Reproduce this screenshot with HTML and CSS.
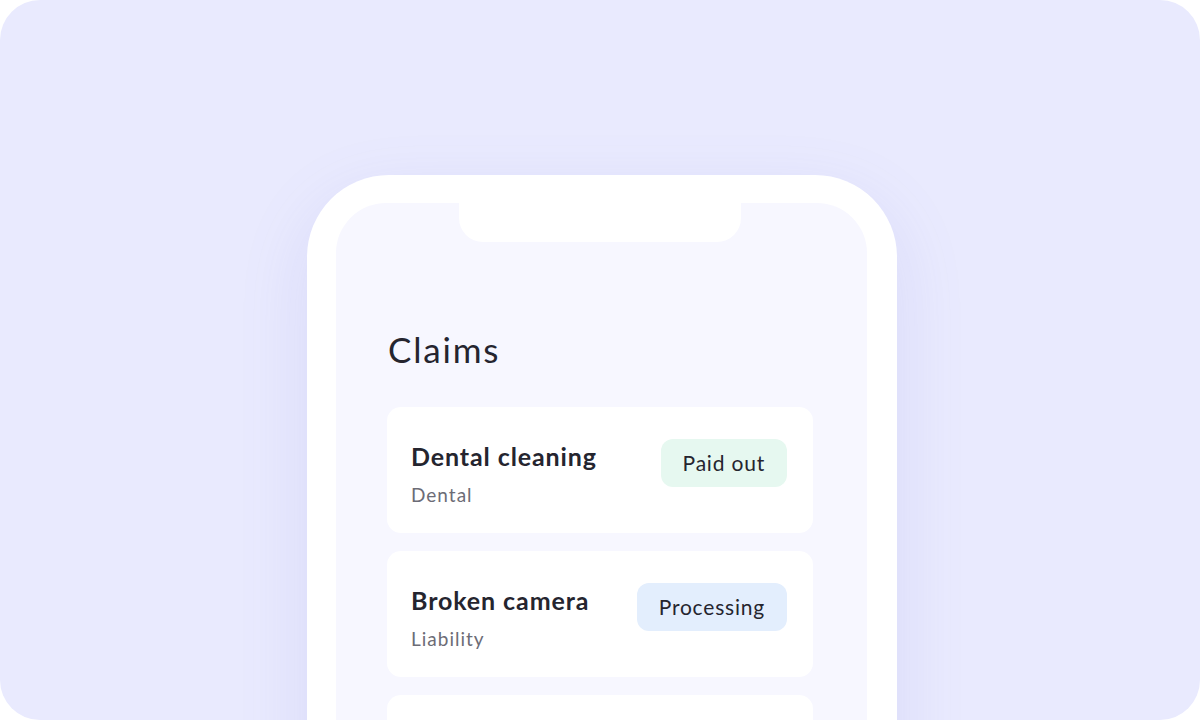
FILE: index.html
```html
<!DOCTYPE html>
<html>
<head>
<meta charset="utf-8">
<link rel="stylesheet" href="styles.css">
</head>
<body>
<div class="stage">
  <div class="phone">
    <div class="screen">
      <div class="notch"></div>
      <h1 class="title">Claims</h1>
      <div class="list">
        <div class="card">
          <div class="info">
            <div class="name">Dental cleaning</div>
            <div class="cat">Dental</div>
          </div>
          <div class="badge paid">Paid out</div>
        </div>
        <div class="card">
          <div class="info">
            <div class="name">Broken camera</div>
            <div class="cat">Liability</div>
          </div>
          <div class="badge processing">Processing</div>
        </div>
        <div class="card"></div>
      </div>
    </div>
  </div>
</div>
</body>
</html>
```
FILE: styles.css
```css
html, body {
  margin: 0;
  padding: 0;
  background: #ffffff;
}
body {
  font-family: Lato, "Open Sans", sans-serif;
  color: #25252f;
}
.stage {
  width: 1200px;
  height: 720px;
  border-radius: 40px;
  background: #e9eafe;
  overflow: hidden;
  display: flex;
  justify-content: center;
  padding: 175px 0 0 4px;
  box-sizing: border-box;
}
.phone {
  width: 590px;
  height: 700px;
  flex: none;
  background: #ffffff;
  border-radius: 82px;
  padding: 28px 30px 0 29px;
  box-sizing: border-box;
  box-shadow: 0 24px 70px rgba(110, 110, 210, 0.14);
}
.screen {
  position: relative;
  background: #f7f7ff;
  border-radius: 50px 50px 0 0;
  height: 100%;
  padding: 124px 54px 0 51px;
  box-sizing: border-box;
}
.notch {
  position: absolute;
  top: 0;
  left: 123px;
  width: 282px;
  height: 39px;
  background: #ffffff;
  border-radius: 0 0 24px 24px;
}
.title {
  margin: 0 0 36px 1px;
  font-size: 35px;
  font-weight: 400;
  line-height: 44px;
  letter-spacing: 1.8px;
  color: #25252f;
}
.list {
  display: flex;
  flex-direction: column;
  gap: 18px;
}
.card {
  background: #ffffff;
  border-radius: 14px;
  height: 126px;
  padding: 32px 26px 0 24px;
  box-sizing: border-box;
  display: flex;
  justify-content: space-between;
  align-items: flex-start;
}
.name {
  font-size: 25px;
  font-weight: 700;
  line-height: 35px;
  letter-spacing: 0.9px;
  color: #25252f;
}
.cat {
  margin-top: 9px;
  font-size: 19px;
  line-height: 24px;
  color: #6c6c76;
  letter-spacing: 1px;
}
.badge {
  height: 48px;
  padding: 0 22px;
  border-radius: 12px;
  font-size: 21px;
  line-height: 48px;
  letter-spacing: 0.8px;
  color: #25252f;
}
.paid {
  background: #e6f8f0;
}
.processing {
  background: #e3eefd;
}
```
